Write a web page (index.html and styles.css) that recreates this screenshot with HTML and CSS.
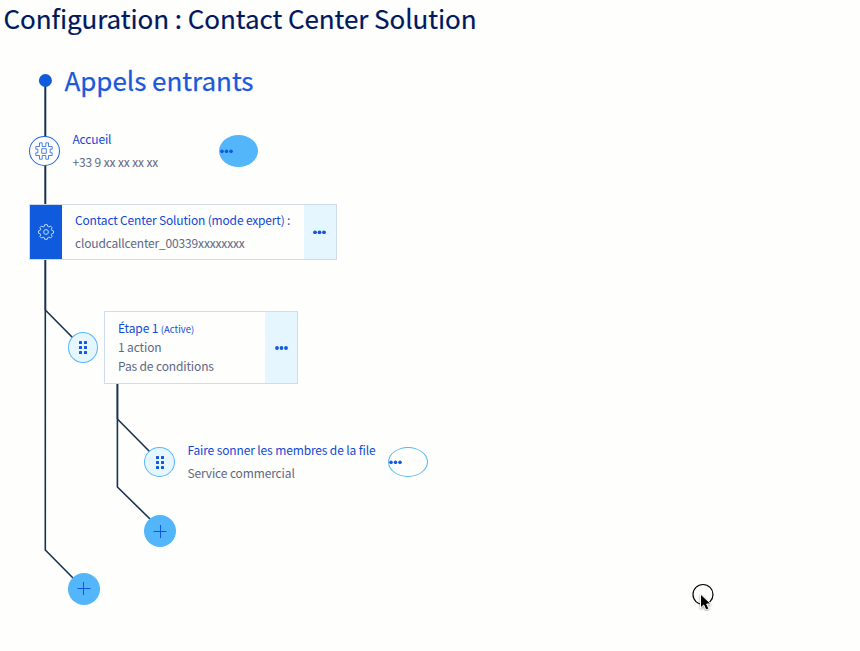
FILE: index.html
```
<!DOCTYPE html>
<html lang="fr">
<head>
<meta charset="utf-8">
<title>Configuration : Contact Center Solution</title>
<link rel="stylesheet" href="styles.css">
</head>
<body>
<h1 class="page-title">Configuration : Contact Center Solution</h1>
<main class="flow">
  <svg class="links" width="860" height="651" viewBox="0 0 860 651">
    <path class="trunk" d="M45.3 80V310M117.4 383V419"/>
    <path d="M45.3 310V550L74 579M45.3 310L73 338M117.4 419V487L150 519M117.4 419L150 452"/>
    <circle class="start" cx="45.4" cy="80.5" r="6.5"/>
  </svg>
  <h2 class="node flow-title">Appels entrants</h2>

  <section class="node entry">
    <span class="bullet outline">
      <svg width="18" height="18" viewBox="0 0 18 18"><path d="M4.5.8h2.7v3.7h3.6V.8h2.7v3.7h3.7v2.7h-2v3.6h2v2.7h-3.7v3.7h-2.7v-3.7H7.2v3.7H4.5v-3.7H.8v-2.7h2V7.2h-2V4.5h3.7zM6.7 6.7h4.6v4.6H6.7z"/></svg>
    </span>
    <div class="text"><a>Accueil</a><span>+33 9 xx xx xx xx</span></div>
  </section>
  <button class="node pill filled" aria-label="Actions"><svg class="dots" width="13" height="4" viewBox="0 0 13 4"><circle cx="2" cy="2.3" r="1.75"/><circle cx="6.5" cy="2.3" r="1.75"/><circle cx="11" cy="2.3" r="1.75"/></svg></button>

  <section class="node card solution">
    <div class="gear">
      <svg width="16" height="16" viewBox="0 0 16 16"><path d="M6.7.7h2.6l.5 1.8 1 .4 1.7-.9 1.6 1.7-.8 1.6.4 1 1.8.6v2.3l-1.8.6-.4 1 .8 1.6-1.6 1.7-1.7-.9-1 .4-.5 1.7H6.7l-.5-1.7-1-.4-1.7.9-1.6-1.7.8-1.6-.4-1-1.8-.6V6.9l1.8-.6.4-1-.8-1.6L3.5 2l1.7.9 1-.4z"/><circle cx="8" cy="8" r="2.4"/></svg>
    </div>
    <div class="text"><a>Contact Center Solution (mode expert) :</a><span>cloudcallcenter_00339xxxxxxxx</span></div>
    <button class="more" aria-label="Actions"><svg class="dots" width="13" height="4" viewBox="0 0 13 4"><circle cx="2" cy="2.3" r="1.9"/><circle cx="6.5" cy="2.3" r="1.9"/><circle cx="11" cy="2.3" r="1.9"/></svg></button>
  </section>

  <span class="node bullet handle step-handle"><i></i><i></i><i></i><i></i><i></i><i></i></span>
  <section class="node card step">
    <div class="text"><a>Étape 1 <small>(Active)</small></a><span>1 action</span><span>Pas de conditions</span></div>
    <button class="more" aria-label="Actions"><svg class="dots" width="13" height="4" viewBox="0 0 13 4"><circle cx="2" cy="2" r="1.9"/><circle cx="6.5" cy="2" r="1.9"/><circle cx="11" cy="2" r="1.9"/></svg></button>
  </section>

  <section class="node ring">
    <span class="bullet handle"><i></i><i></i><i></i><i></i><i></i><i></i></span>
    <div class="text"><a>Faire sonner les membres de la file</a><span>Service commercial</span></div>
  </section>
  <button class="node pill hollow" aria-label="Actions"><svg class="dots" width="13" height="4" viewBox="0 0 13 4"><circle cx="2" cy="2.3" r="1.75"/><circle cx="6.5" cy="2.3" r="1.75"/><circle cx="11" cy="2.3" r="1.75"/></svg></button>

  <button class="node add add-action" aria-label="Ajouter"><svg width="14" height="14" viewBox="0 0 14 14"><path d="M.5 7.5h13M7.5 1v13"/></svg></button>
  <button class="node add add-step" aria-label="Ajouter"><svg width="14" height="14" viewBox="0 0 14 14"><path d="M.5 6.5h13M6.5 0v13"/></svg></button>

  <svg class="node cursor" width="24" height="28" viewBox="0 0 24 28">
    <circle cx="11" cy="11.5" r="10"/>
    <path d="M8.5 11v14l3.2-3 2.2 5 3-1.3-2.2-4.7h4.3z"/>
  </svg>
</main>
</body>
</html>
```
FILE: styles.css
```
* { box-sizing: border-box; }
body {
  margin: 0;
  position: relative;
  width: 860px;
  height: 651px;
  overflow: hidden;
  background: #fefefd;
  color: #5d6783;
  font-family: "Noto Sans CJK SC", "Noto Sans", sans-serif;
  font-size: 12px;
}
h1, h2 { margin: 0; font-weight: 400; white-space: nowrap; }
.page-title { padding-left: 3.5px; height: 36px; line-height: 36px; font-size: 26px; letter-spacing: -.065px; color: #00185e; -webkit-text-stroke: .2px; }
.flow { position: absolute; inset: 0; }
.links { position: absolute; inset: 0; fill: none; stroke: #17324f; stroke-width: 1.6; }
.links .trunk { stroke-width: 2; }
.links .start { fill: #0f5add; stroke: none; }
.node { position: absolute; }
.flow-title { left: 64.5px; top: 62px; line-height: 36px; font-size: 26px; letter-spacing: -.03px; color: #1a59dc; -webkit-text-stroke: .25px; }

.text { display: flex; flex-direction: column; line-height: 23px; letter-spacing: -.13px; white-space: nowrap; }
.text a { color: #1148d3; }
.text small { font-size: 9.5px; line-height: 0; letter-spacing: 0; }
button { border: 0; padding: 0; }
.dots { fill: #1058df; }

.bullet { display: flex; flex: none; align-items: center; justify-content: center; width: 31px; height: 31px; border-radius: 50%; }
.outline { position: relative; top: 1px; height: 30px; background: #fefefd; border: 1px solid #1d62dd; }
.outline svg { margin-right: 1px; fill: none; stroke: #2e6ddf; stroke-width: .85; }
.handle { background: #e5f6ff; border: 1px solid #55b8f8; display: grid; grid-template-columns: 3px 3px; grid-auto-rows: 3px; gap: 2px; align-content: center; justify-content: center; }
.handle i { width: 3px; height: 3px; background: #1058df; border-radius: .5px; }

.entry { left: 29px; top: 127px; display: flex; align-items: center; gap: 12.4px; }
.pill { display: flex; align-items: center; border-radius: 50%; }
.filled { left: 219px; top: 135px; width: 39px; height: 32px; padding-left: .5px; background: #53b6fa; }
.hollow { left: 388px; top: 447px; width: 40px; height: 30px; background: #fefefd; border: 1px solid #55b8f0; }

.card { display: flex; border: 1px solid #cfdceb; background: #fefefd; }
.card .more { display: flex; align-items: center; justify-content: center; width: 32px; background: #e5f6ff; }
.card .text { flex: 1; }
.solution { left: 29px; top: 204px; width: 308px; height: 56px; }
.solution .more { padding-right: 1px; }
.gear { display: flex; align-items: center; justify-content: center; width: 32px; background: #0f5add; }
.gear svg { fill: none; stroke: #b9dcff; stroke-width: 1; }
.solution .text { padding: 3px 0 0 13px; letter-spacing: -.165px; }
.step-handle { left: 68px; top: 332px; width: 30px; }
.step { left: 104px; top: 311px; width: 194px; height: 73px; }
.step .text { padding: 6px 0 0 13px; line-height: 19px; }
.ring { left: 144px; top: 438px; display: flex; align-items: center; gap: 12.4px; }
.ring .bullet { position: relative; top: 1px; height: 30px; padding: 1px 0 0 1px; }
.add { display: flex; align-items: center; justify-content: center; width: 32px; height: 32px; border-radius: 50%; background: #53b6fa; }
.add svg { fill: none; stroke: #1058df; stroke-width: 1; }
.add-action { left: 144px; top: 515px; }
.add-step { left: 68px; top: 573px; }
.cursor { left: 691.5px; top: 583px; }
.cursor circle { fill: none; stroke: #000; stroke-width: 1.2; }
.cursor path { fill: #000; stroke: #fff; stroke-width: 1; filter: drop-shadow(0 1px 1px #0006); }
```
